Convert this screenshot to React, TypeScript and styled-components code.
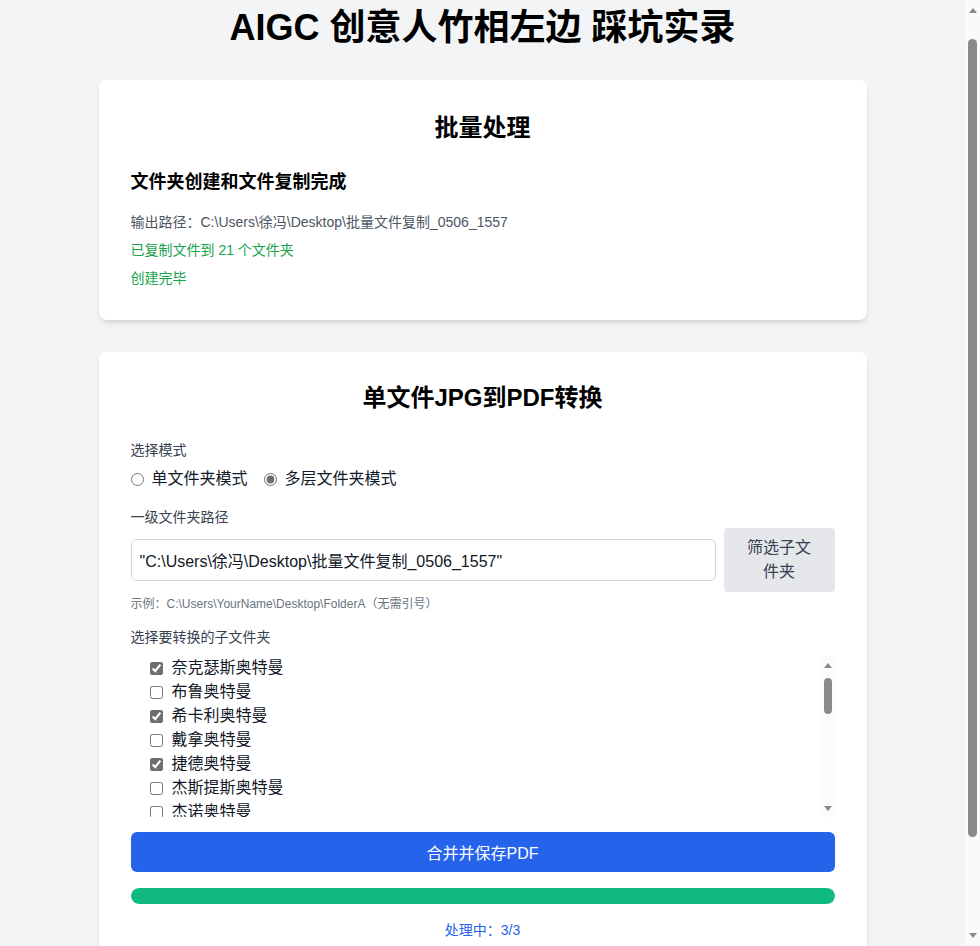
import React from "react";
import styled, { createGlobalStyle } from "styled-components";

const Global = createGlobalStyle`
  html, body { margin: 0; padding: 0; }
  body {
    background: #f3f4f6;
    font-family: "Liberation Sans", "Noto Sans CJK SC", sans-serif;
    color: #111827;
  }
  * { box-sizing: border-box; }
`;

const Page = styled.div`
  padding: 8px 31px 140px 16px;
  display: flex;
  flex-direction: column;
  align-items: center;
`;

const Title = styled.h1`
  margin: 0 0 32px 0;
  font-size: 36px;
  line-height: 40px;
  font-weight: 700;
  color: #000;
  text-align: center;
`;

const Card = styled.section`
  width: 768px;
  background: #fff;
  border-radius: 8px;
  box-shadow: 0 4px 6px -1px rgba(0, 0, 0, 0.1), 0 2px 4px -2px rgba(0, 0, 0, 0.1);
  padding: 32px;
  margin-bottom: 32px;
  display: flex;
  flex-direction: column;
`;

const CardTitle = styled.h2<{ $mt?: number; $mb?: number }>`
  margin: ${(p) => p.$mt ?? 0}px 0 ${(p) => p.$mb ?? 24}px 0;
  font-size: 24px;
  line-height: 32px;
  font-weight: 700;
  text-align: center;
  color: #000;
`;

const SubTitle = styled.h3`
  margin: 0 0 16px 0;
  font-size: 18px;
  line-height: 28px;
  font-weight: 700;
  color: #000;
`;

const Line = styled.p<{ $tone?: "gray" | "green" }>`
  margin: 0 0 8px 0;
  font-size: 14px;
  line-height: 20px;
  color: ${(p) => (p.$tone === "green" ? "#16a34a" : "#4b5563")};
  &:last-child { margin-bottom: 0; }
`;

const Label = styled.div<{ $mb?: number }>`
  font-size: 14px;
  line-height: 20px;
  color: #374151;
  margin-bottom: ${(p) => p.$mb ?? 8}px;
`;

const RadioRow = styled.div`
  display: flex;
  gap: 16px;
  margin-bottom: 16px;
`;

const RadioLabel = styled.label`
  display: flex;
  align-items: center;
  font-size: 16px;
  line-height: 24px;
  color: #111827;
  input {
    margin: 0 8px 0 0;
    width: 13px;
    height: 13px;
    accent-color: #6f6f6f;
  }
`;

const PathRow = styled.div`
  display: flex;
  align-items: center;
  gap: 8px;
  margin-bottom: 4px;
`;

const PathInput = styled.input`
  flex: 1;
  height: 42px;
  border: 1px solid #d1d5db;
  border-radius: 6px;
  padding: 0 8px;
  font-size: 16px;
  font-family: inherit;
  color: #111827;
  background: #fff;
  outline: none;
`;

const FilterButton = styled.button`
  width: 111px;
  padding: 8px 16px;
  border: none;
  border-radius: 4px;
  background: #e5e7eb;
  color: #374151;
  font-size: 16px;
  line-height: 24px;
  font-family: inherit;
`;

const Hint = styled.div`
  font-size: 12px;
  line-height: 16px;
  color: #6b7280;
  margin-bottom: 15px;
`;

const ListWrap = styled.div`
  position: relative;
  margin-bottom: 15px;
`;

const FolderList = styled.div`
  max-height: 161px;
  overflow-y: auto;
  padding-left: 19px;
`;

const FolderItem = styled.label`
  display: flex;
  align-items: center;
  font-size: 16px;
  line-height: 24px;
  color: #111827;
  input {
    margin: 0 9px 0 0;
    width: 13px;
    height: 13px;
    accent-color: #6f6f6f;
  }
`;

const ListScrollbar = styled.div`
  position: absolute;
  top: 0;
  right: 0;
  width: 14px;
  height: 161px;
  background: #fbfbfb;
  display: flex;
  flex-direction: column;
  align-items: center;
  padding: 7px 0 6px;
  pointer-events: none;
`;

const Arrow = styled.div<{ $dir: "up" | "down" }>`
  width: 0;
  height: 0;
  border-left: 4px solid transparent;
  border-right: 4px solid transparent;
  ${(p) =>
    p.$dir === "up"
      ? "border-bottom: 5px solid #8a8a8a;"
      : "border-top: 5px solid #8a8a8a;"}
`;

const Thumb = styled.div<{ $w: number }>`
  width: ${(p) => p.$w}px;
  border-radius: ${(p) => p.$w / 2}px;
  background: #8a8a8a;
`;

const Spacer = styled.div`
  flex: 1;
`;

const PageScrollbar = styled.div`
  position: fixed;
  top: 0;
  right: 0;
  width: 15px;
  height: 100vh;
  background: #fafafa;
  display: flex;
  flex-direction: column;
  align-items: center;
  padding: 8px 0 8px;
  z-index: 10;
`;

const PrimaryButton = styled.button`
  height: 40px;
  border: none;
  border-radius: 6px;
  background: #2563eb;
  color: #fff;
  font-size: 16px;
  font-family: inherit;
  margin-bottom: 16px;
`;

const Track = styled.div`
  height: 16px;
  border-radius: 9999px;
  background: #e5e7eb;
  overflow: hidden;
  margin-bottom: 16px;
`;

const Fill = styled.div`
  height: 100%;
  background: #10b981;
  border-radius: 9999px;
`;

const Status = styled.div`
  text-align: center;
  font-size: 14px;
  line-height: 20px;
  color: #2563eb;
`;

const folders: [string, boolean][] = [
  ["奈克瑟斯奥特曼", true],
  ["布鲁奥特曼", false],
  ["希卡利奥特曼", true],
  ["戴拿奥特曼", false],
  ["捷德奥特曼", true],
  ["杰斯提斯奥特曼", false],
  ["杰诺奥特曼", false],
  ["盖亚奥特曼", false],
  ["高斯奥特曼", false],
  ["迪迦奥特曼", false],
];

export default function App() {
  const [done, total] = [3, 3];
  return (
    <>
      <Global />
      <PageScrollbar>
        <Arrow $dir="up" />
        <Thumb $w={9} style={{ height: 798, marginTop: 26 }} />
        <Spacer />
        <Arrow $dir="down" />
      </PageScrollbar>
      <Page>
        <Title>AIGC 创意人竹相左边 踩坑实录</Title>
        <Card>
          <CardTitle>批量处理</CardTitle>
          <SubTitle>文件夹创建和文件复制完成</SubTitle>
          <Line>输出路径：C:\Users\徐冯\Desktop\批量文件复制_0506_1557</Line>
          <Line $tone="green">已复制文件到 21 个文件夹</Line>
          <Line $tone="green">创建完毕</Line>
        </Card>
        <Card>
          <CardTitle $mt={-2} $mb={26}>单文件JPG到PDF转换</CardTitle>
          <Label $mb={7}>选择模式</Label>
          <RadioRow>
            <RadioLabel>
              <input type="radio" name="mode" />
              单文件夹模式
            </RadioLabel>
            <RadioLabel>
              <input type="radio" name="mode" defaultChecked />
              多层文件夹模式
            </RadioLabel>
          </RadioRow>
          <Label $mb={1}>一级文件夹路径</Label>
          <PathRow>
            <PathInput readOnly value={'"C:\\Users\\徐冯\\Desktop\\批量文件复制_0506_1557"'} />
            <FilterButton>筛选子文件夹</FilterButton>
          </PathRow>
          <Hint>示例：C:\Users\YourName\Desktop\FolderA（无需引号）</Hint>
          <Label $mb={9}>选择要转换的子文件夹</Label>
          <ListWrap>
            <FolderList>
              {folders.map(([name, checked]) => (
                <FolderItem key={name}>
                  <input type="checkbox" defaultChecked={checked} />
                  {name}
                </FolderItem>
              ))}
            </FolderList>
            <ListScrollbar>
              <Arrow $dir="up" />
              <Thumb $w={8} style={{ height: 36, marginTop: 10 }} />
              <Spacer />
              <Arrow $dir="down" />
            </ListScrollbar>
          </ListWrap>
          <PrimaryButton>合并并保存PDF</PrimaryButton>
          <Track>
            <Fill style={{ width: `${(done / total) * 100}%` }} />
          </Track>
          <Status>处理中：{done}/{total}</Status>
        </Card>
      </Page>
    </>
  );
}
